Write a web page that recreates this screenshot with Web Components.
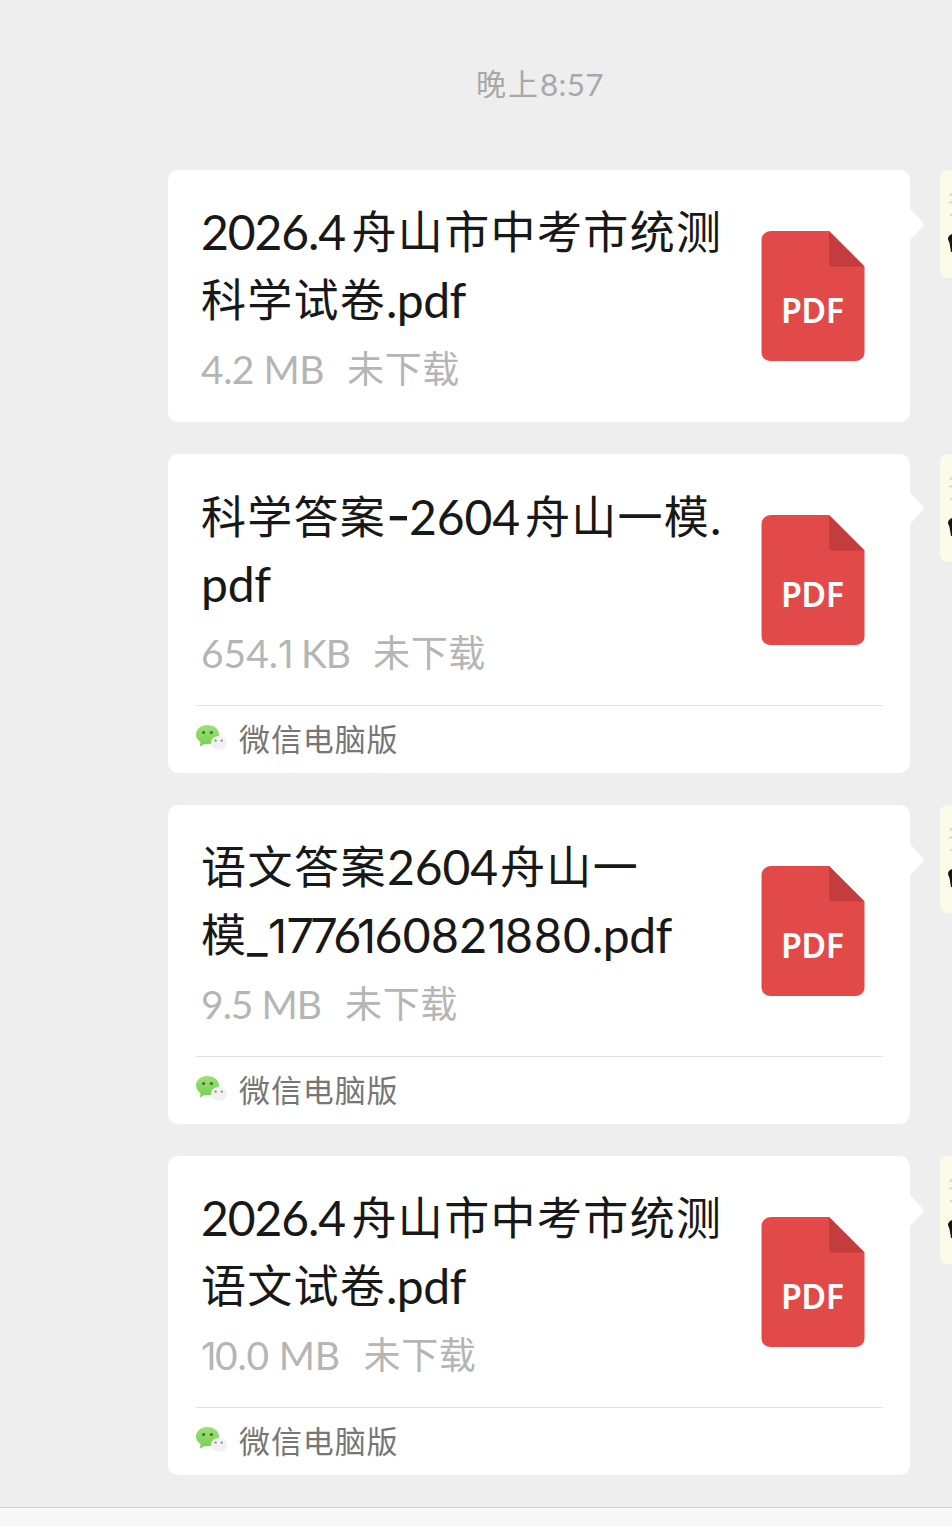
<!DOCTYPE html>
<html lang="zh-CN">
<head>
<meta charset="utf-8">
<title>聊天</title>
<style>
  body {
    margin: 0;
    background: #eeeeee;
    font-family: Lato, "Noto Sans CJK SC", sans-serif;
  }
</style>
</head>
<body>
<chat-window>
  <chat-time>
    <text-run width="64">晚上</text-run><text-run width="64" size="31.5">8:57</text-run>
  </chat-time>

  <file-message>
    <title-line slot="title"><text-run width="144" after="6.5" size="48">2026.4</text-run><text-run width="371">舟山市中考市统测</text-run></title-line>
    <title-line slot="title"><text-run width="185">科学试卷</text-run><text-run width="80" size="48">.pdf</text-run></title-line>
    <text-run slot="meta" width="123" after="23" size="39">4.2 MB</text-run><text-run slot="meta" width="113">未下载</text-run>
  </file-message>

  <file-message source="微信电脑版">
    <title-line slot="title"><text-run width="185">科学答案</text-run><text-run width="23" size="54" plain>-</text-run><text-run width="111" after="5" size="48">2604</text-run><text-run width="185">舟山一模</text-run><text-run width="14" size="48">.</text-run></title-line>
    <title-line slot="title"><text-run width="70" size="48">pdf</text-run></title-line>
    <text-run slot="meta" width="77" size="39">654.</text-run><text-run slot="meta" width="14" size="38" plain>1</text-run><text-run slot="meta" width="58" after="23" size="39"> KB</text-run><text-run slot="meta" width="113">未下载</text-run>
  </file-message>

  <file-message source="微信电脑版">
    <title-line slot="title"><text-run width="186">语文答案</text-run><text-run width="111" after="2" size="48">2604</text-run><text-run width="139">舟山一</text-run></title-line>
    <title-line slot="title"><text-run width="46">模</text-run><text-run width="21" size="45" plain>_</text-run><text-run width="18" size="47" plain>1</text-run><text-run width="71" size="48">776</text-run><text-run width="17.500" size="47" plain>1</text-run><text-run width="113" size="48">6082</text-run><text-run width="17.500" size="47" plain>1</text-run><text-run width="87" size="48">880</text-run><text-run width="80" size="48">.pdf</text-run></title-line>
    <text-run slot="meta" width="120" after="24" size="39">9.5 MB</text-run><text-run slot="meta" width="113">未下载</text-run>
  </file-message>

  <file-message source="微信电脑版">
    <title-line slot="title"><text-run width="144" after="6.5" size="48">2026.4</text-run><text-run width="371">舟山市中考市统测</text-run></title-line>
    <title-line slot="title"><text-run width="185">语文试卷</text-run><text-run width="80" size="48">.pdf</text-run></title-line>
    <text-run slot="meta" width="14" size="38" plain>1</text-run><text-run slot="meta" width="125" after="23.5" size="39">0.0 MB</text-run><text-run slot="meta" width="113">未下载</text-run>
  </file-message>
</chat-window>

<script>
// Spreads its text over a given advance width by adjusting letter-spacing.
// "after" is the gap to the next run, "plain" picks the digits without serifs.
class TextRun extends HTMLElement {
  constructor() {
    super();
    this.attachShadow({ mode: "open" });
  }

  connectedCallback() {
    const size = this.getAttribute("size");
    const style = `
      :host {
        display: inline-block;
        white-space: pre;
        margin-right: ${this.getAttribute("after") || 0}px;
        ${size ? `font-size: ${size}px;` : "transform: translateY(-1.5px);"}
      }
      :host([plain]) { font-family: Inter, sans-serif; }
    `;
    this.shadowRoot.innerHTML = `<style>${style}</style><slot></slot>`;
    this._fit();
  }

  _fit() {
    const target = Number(this.getAttribute("width"));
    this.style.letterSpacing = "0.01px";
    const natural = this.getBoundingClientRect().width;
    const count = [...this.textContent].length;
    this.style.letterSpacing = `${(target - natural) / count}px`;
    this.style.width = `${target}px`;
  }
}

class TitleLine extends HTMLElement {
  constructor() {
    super();
    this.attachShadow({ mode: "open" });
  }

  connectedCallback() {
    this.shadowRoot.innerHTML = `
      <style>
        :host {
          display: flex;
          align-items: baseline;
          height: 68px;
          line-height: 68px;
          white-space: nowrap;
        }
      </style>
      <slot></slot>
    `;
  }
}

class ChatTime extends HTMLElement {
  constructor() {
    super();
    this.attachShadow({ mode: "open" });
  }

  connectedCallback() {
    this.shadowRoot.innerHTML = `
      <style>
        :host {
          display: flex;
          align-items: baseline;
          height: 40px;
          padding: 64px 0 66px 476px;
          font-size: 30px;
          line-height: 40px;
          color: #a8a8a8;
        }
      </style>
      <slot></slot>
    `;
  }
}

class PdfIcon extends HTMLElement {
  constructor() {
    super();
    this.attachShadow({ mode: "open" });
  }

  connectedCallback() {
    this.shadowRoot.innerHTML = `
      <style>
        :host {
          display: block;
          width: 104px;
          height: 131px;
        }
        svg { display: block; }
        text {
          font: 600 34px "Noto Sans", sans-serif;
          fill: #fff;
        }
      </style>
      <svg width="104" height="131" viewBox="0 0 104 131">
        <path d="M9.500 0h58.500L103.500 35.500v86a8.500 8.500 0 0 1-8.500 8.500H9a8.500 8.500 0 0 1-8.500-8.500V9a9 9 0 0 1 9-9z" fill="#e24a4a"/>
        <path d="M68 0l35.500 35.500H71.500a3.500 3.500 0 0 1-3.500-3.500z" fill="#c33c3e"/>
        <text x="20" y="91.500" textLength="63">PDF</text>
      </svg>
    `;
  }
}

class WechatIcon extends HTMLElement {
  constructor() {
    super();
    this.attachShadow({ mode: "open" });
  }

  connectedCallback() {
    this.shadowRoot.innerHTML = `
      <style>
        :host { display: block; width: 32px; height: 28px; margin-bottom: 3px; }
        svg { display: block; }
      </style>
      <svg width="32" height="28" viewBox="0 0 32 28">
        <defs>
          <linearGradient id="leaf" x1="0" y1="0" x2="0" y2="1">
            <stop offset="0" stop-color="#a0df77"/>
            <stop offset="1" stop-color="#75cf4e"/>
          </linearGradient>
        </defs>
        <path d="M11.500 1C5 1 0 5 0 10.500c0 3.200 1.700 5.800 4.500 7.600L4 22.500l4.500-2.600c1 .2 2 .3 3 .3C18 20.200 23 16 23 10.500S18 1 11.500 1z" fill="url(#leaf)"/>
        <circle cx="7.600" cy="8.500" r="1.600" fill="#3d7130"/>
        <circle cx="15.400" cy="8.500" r="1.600" fill="#3d7130"/>
        <path d="M23 12c-4.700 0-8 3-8 6.800s3.300 6.800 8 6.800c.9 0 1.700-.1 2.500-.3l3.200 1.700-.6-3c1.900-1.300 3-3.100 3-5.200 0-3.800-3.400-6.800-8.100-6.800z" fill="#f1f1f1"/>
        <circle cx="19.600" cy="16.600" r="1.200" fill="#8d9292"/>
        <circle cx="25.800" cy="16.600" r="1.200" fill="#8d9292"/>
      </svg>
    `;
  }
}

class ChatAvatar extends HTMLElement {
  constructor() {
    super();
    this.attachShadow({ mode: "open" });
  }

  connectedCallback() {
    this.shadowRoot.innerHTML = `
      <style>
        :host {
          display: block;
          width: 108px;
          height: 108px;
          border-radius: 8px;
          overflow: hidden;
          background: #fbfbe9;
        }
        svg { display: block; }
      </style>
      <svg width="108" height="108" viewBox="0 0 108 108">
        <path d="M10 26l2-3M9 33l3-1M10 46l2-2" stroke="#d5d5bd" stroke-width="1.500"/>
        <path d="M12 64c-3 1-4 3-4 5 0 1 1 2 1.500 4l1.500 9h2V64z" fill="#161616"/>
      </svg>
    `;
  }
}

class FileMessage extends HTMLElement {
  constructor() {
    super();
    this.attachShadow({ mode: "open" });
  }

  connectedCallback() {
    const source = this.getAttribute("source");
    this.shadowRoot.innerHTML = `
      <style>
        :host {
          display: flex;
          align-items: flex-start;
          gap: 30px;
          margin: 0 0 32px 168px;
        }
        .bubble {
          position: relative;
          flex: none;
          box-sizing: border-box;
          width: 742px;
          border-radius: 10px;
          background: #fff;
        }
        .tail {
          position: absolute;
          left: 742px;
          top: 39px;
        }
        .body {
          display: flex;
          height: 252px;
        }
        .body.with-source { height: 251px; }
        .text {
          width: 561px;
          padding: 28px 0 0 33px;
        }
        .title {
          font-size: 45px;
          color: #181818;
        }
        .meta {
          display: flex;
          align-items: baseline;
          height: 54px;
          margin-top: 8px;
          font-size: 37px;
          line-height: 54px;
          color: #b5b5b5;
        }
        pdf-icon { margin-top: 61px; margin-left: -1px; }
        .source {
          display: flex;
          align-items: center;
          gap: 11px;
          box-sizing: border-box;
          height: 68px;
          margin: 0 27px 0 28px;
          border-top: 1px solid #e2e2e2;
          font-size: 31px;
          line-height: 40px;
          color: #767676;
        }
        chat-avatar { flex: none; }
      </style>
      <div class="bubble">
        <div class="body ${source ? "with-source" : ""}">
          <div class="text">
            <div class="title"><slot name="title"></slot></div>
            <div class="meta"><slot name="meta"></slot></div>
          </div>
          <pdf-icon></pdf-icon>
        </div>
        ${source ? `<div class="source"><wechat-icon></wechat-icon><text-run width="159.5">${source}</text-run></div>` : ""}
        <svg class="tail" width="15" height="32" viewBox="0 0 15 32">
          <path d="M0 0l12.500 13q2 2.500 0 5L0 31z" fill="#fff"/>
        </svg>
      </div>
      <chat-avatar></chat-avatar>
    `;
  }
}

class ChatWindow extends HTMLElement {
  constructor() {
    super();
    this.attachShadow({ mode: "open" });
  }

  connectedCallback() {
    this.shadowRoot.innerHTML = `
      <style>
        :host {
          display: flex;
          flex-direction: column;
          height: 1526px;
          overflow: hidden;
        }
        .messages { flex: none; height: 1507px; }
        .toolbar {
          flex: 1;
          border-top: 1px solid #cfcfcf;
          background: #f7f7f7;
        }
      </style>
      <div class="messages"><slot></slot></div>
      <div class="toolbar"></div>
    `;
  }
}

customElements.define("chat-window", ChatWindow);
customElements.define("chat-time", ChatTime);
customElements.define("pdf-icon", PdfIcon);
customElements.define("wechat-icon", WechatIcon);
customElements.define("chat-avatar", ChatAvatar);
customElements.define("title-line", TitleLine);
customElements.define("file-message", FileMessage);
customElements.define("text-run", TextRun);
</script>
</body>
</html>
